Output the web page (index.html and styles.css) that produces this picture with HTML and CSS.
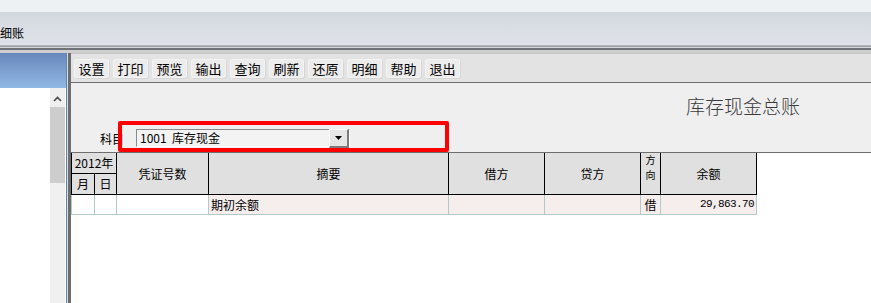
FILE: index.html
```html
<!DOCTYPE html>
<html lang="zh-CN">
<head>
	<meta charset="UTF-8" />
	<title>库存现金总账</title>
	<link rel="stylesheet" href="styles.css">
</head>
<body>
	<div class="screen">
		<!-- 顶部菜单 -->
		<div class="topstrip"></div>
		<div class="menubar"><span class="menu-title">细账</span></div>
		<div class="menusep"></div>
		<!-- END of 顶部菜单 -->
		<div class="workspace">
			<!-- 左侧导航 -->
			<div class="nav">
				<div class="nav-head"></div>
				<div class="nav-body">
					<div class="scrollbar">
						<div class="scroll-up">
							<svg width="9" height="6" viewBox="0 0 9 6"><path d="M1 5 L4.5 1.5 L8 5" fill="none" stroke="#4a4a4a" stroke-width="1.6" /></svg>
						</div>
						<div class="scroll-thumb"></div>
					</div>
				</div>
			</div>
			<div class="splitter"></div>
			<!-- END of 左侧导航 -->
			<!-- 主窗口 -->
			<div class="main">
				<div class="toolbar">
					<span class="tb-btn">设置</span>
					<span class="tb-btn">打印</span>
					<span class="tb-btn">预览</span>
					<span class="tb-btn">输出</span>
					<span class="tb-btn">查询</span>
					<span class="tb-btn">刷新</span>
					<span class="tb-btn">还原</span>
					<span class="tb-btn">明细</span>
					<span class="tb-btn">帮助</span>
					<span class="tb-btn">退出</span>
				</div>
				<div class="head">
					<div class="title">库存现金总账</div>
					<div class="subject-row">
						<label class="subject-label">科目</label>
						<div class="combo">
							<span class="combo-text">1001&nbsp;&nbsp;库存现金</span>
							<span class="combo-btn">
								<svg width="7" height="4" viewBox="0 0 7 4"><path d="M0 0 H7 L3.5 4 Z" fill="#000" /></svg>
							</span>
						</div>
					</div>
					<!-- 红框标注 -->
					<div class="highlight"></div>
				</div>
				<div class="grid">
					<table class="ledger">
						<colgroup>
							<col style="width: 23px" />
							<col style="width: 22px" />
							<col style="width: 92px" />
							<col style="width: 240px" />
							<col style="width: 96px" />
							<col style="width: 96px" />
							<col style="width: 20px" />
							<col style="width: 96px" />
						</colgroup>
						<thead>
							<tr class="row-a">
								<th colspan="2" class="year">2012年</th>
								<th rowspan="2">凭证号数</th>
								<th rowspan="2">摘要</th>
								<th rowspan="2">借方</th>
								<th rowspan="2">贷方</th>
								<th rowspan="2" class="dir">方<br />向</th>
								<th rowspan="2">余额</th>
							</tr>
							<tr class="row-b">
								<th>月</th>
								<th>日</th>
							</tr>
						</thead>
						<tbody>
							<tr>
								<td class="plain"></td>
								<td class="plain"></td>
								<td class="plain"></td>
								<td class="memo">期初余额</td>
								<td></td>
								<td></td>
								<td class="center">借</td>
								<td class="amount">29,863.70</td>
							</tr>
						</tbody>
					</table>
				</div>
			</div>
			<!-- END of 主窗口 -->
		</div>
	</div>
</body>
</html>
```

FILE: styles.css
```css
html,
body,
div,
table {
	margin: 0;
	padding: 0;
	box-sizing: border-box;
}

body {
	width: 871px;
	height: 303px;
	overflow: hidden;
	background-color: #fff;
	font-family: "Noto Sans CJK SC", "Liberation Sans", sans-serif;
	font-size: 12px;
	color: #000;
}

.screen {
	display: flex;
	flex-direction: column;
	height: 303px;
}

/*顶部菜单*/
.topstrip {
	height: 12px;
	background-color: #eef1f4;
}

.menubar {
	height: 33px;
	padding-top: 12px;
	line-height: 17px;
	background: linear-gradient(#d3d8df, #dfe3e9);
	font-size: 12px;
}

.menu-title {
	margin-left: 0;
}

.menusep {
	height: 8px;
	background: linear-gradient(#b4b8bd 0, #b4b8bd 1px, #9ca0a6 1px, #9ca0a6 2px, #d7d9dc 2px, #d7d9dc 3px, #6f7378 3px, #6f7378 5px, #cfcfcf 5px);
}

.workspace {
	flex: 1;
	display: flex;
}

/*左侧导航*/
.nav {
	width: 66px;
	display: flex;
	flex-direction: column;
}

.nav-head {
	height: 35px;
	background: linear-gradient(#6788bb, #92b8e5);
}

.nav-body {
	flex: 1;
	display: flex;
	justify-content: flex-end;
	padding-right: 1px;
	background-color: #fff;
}

.scrollbar {
	width: 15px;
	background-color: #f0f0f0;
}

.scroll-up {
	height: 19px;
	display: flex;
	align-items: center;
	justify-content: center;
	padding-top: 2px;
}

.scroll-thumb {
	height: 76px;
	background-color: #cdcdcd;
}

.splitter {
	width: 5px;
	background: linear-gradient(to right, #5a86b0 0, #5a86b0 1px, #dcdcdc 1px, #dcdcdc 2px, #6e6e6e 2px);
}

/*主窗口*/
.main {
	flex: 1;
	display: flex;
	flex-direction: column;
	background-color: #fff;
}

.toolbar {
	height: 30px;
	display: flex;
	gap: 4px;
	padding: 5px 0 0 3px;
	background-color: #e3e3e3;
	border-top: 1px solid #c4c4c4;
	border-bottom: 1px solid #6f6f6f;
}

.tb-btn {
	width: 35px;
	height: 19px;
	line-height: 19px;
	text-align: center;
	font-size: 13px;
	background-color: #ececec;
	border-radius: 3px;
	box-shadow: 1px 1px 0 #d6d6d6, inset 0 0 0 1px #f3f3f3;
}

.head {
	position: relative;
	height: 69px;
	padding-top: 11px;
	background-color: #efefef;
}

.title {
	height: 24px;
	line-height: 24px;
	padding-right: 71px;
	text-align: right;
	font-size: 19px;
	font-weight: 300;
	color: #3a3a3a;
}

.subject-row {
	display: flex;
	align-items: center;
	height: 18px;
	margin-top: 11px;
	padding-left: 29px;
}

.subject-label {
	width: 36px;
	line-height: 18px;
	padding-top: 2px;
}

.combo {
	width: 214px;
	height: 18px;
	display: flex;
	align-items: center;
	justify-content: space-between;
	background-color: #f3f3f3;
	border-top: 1px solid #8c8c8c;
	border-left: 1px solid #8c8c8c;
	border-bottom: 1px solid #fff;
	border-right: 1px solid #fff;
}

.combo-text {
	padding-left: 3px;
	line-height: 16px;
}

.combo-btn {
	width: 17px;
	height: 16px;
	display: flex;
	align-items: center;
	justify-content: center;
	background-color: #e6e6e6;
	border-top: 1px solid #fff;
	border-left: 1px solid #fff;
	border-bottom: 2px solid #7a7a7a;
	border-right: 2px solid #7a7a7a;
}

/*红框标注*/
.highlight {
	position: absolute;
	left: 47px;
	top: 38px;
	width: 331px;
	height: 31px;
	border: 4px solid #ff0000;
	border-radius: 2px;
}

/*账表*/
.grid {
	flex: 1;
	border-top: 1px solid #6e6e6e;
	background-color: #fff;
}

.ledger {
	table-layout: fixed;
	width: 685px;
	border-collapse: collapse;
	border-spacing: 0;
}

.ledger th {
	height: 20px;
	padding: 0;
	font-weight: normal;
	background-color: #e0e0e0;
	border: 1px solid #000;
	border-top: none;
	line-height: 14px;
}

.ledger .row-b th {
	border-top: 1px solid #000;
}

.ledger th.dir {
	vertical-align: top;
	line-height: 14.5px;
	padding-top: 0;
	font-size: 10px;
}

.ledger td {
	height: 19px;
	padding: 0;
	background-color: #f6eded;
	border: 1px solid #b3caca;
	border-top: none;
	line-height: 15px;
}

.ledger td.plain {
	background-color: #fff;
}

.ledger td.memo {
	padding-left: 2px;
}

.ledger td.center {
	text-align: center;
}

.ledger td.amount {
	text-align: right;
	padding-right: 2px;
	font-family: "Liberation Mono", monospace;
	font-size: 11px;
	letter-spacing: -0.6px;
}

[hidden] { display: none; }
```
